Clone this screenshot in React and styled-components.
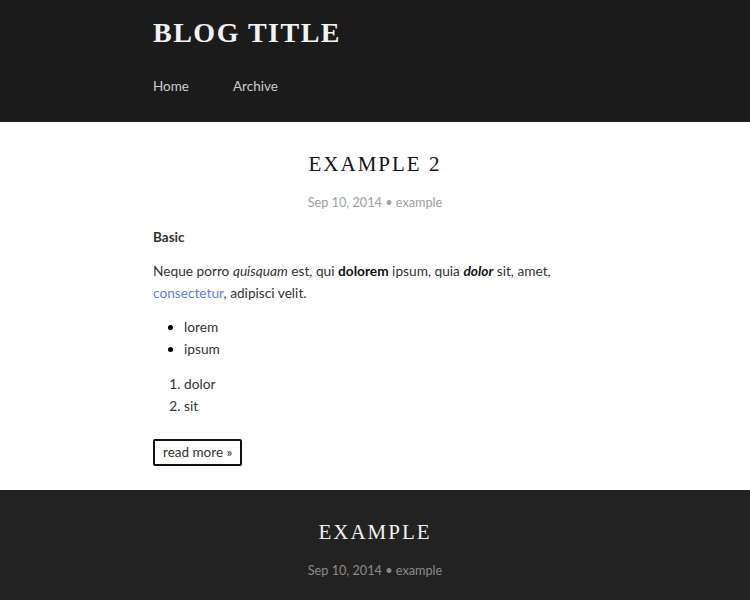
import React from 'react';
import styled, { createGlobalStyle } from 'styled-components';

const GlobalStyle = createGlobalStyle`
  body {
    margin: 0;
    font-family: 'Lato', 'Noto Sans', sans-serif;
    background: #ffffff;
  }
`;

const Header = styled.header`
  background-color: #1b1b1b;
  height: 122px;
  box-sizing: border-box;
  padding-top: 15px;
`;

const Container = styled.div`
  width: 444px;
  margin: 0 auto;
`;

const BlogTitle = styled.h1`
  margin: 0;
  font-family: 'Liberation Serif', serif;
  font-size: 28px;
  font-weight: bold;
  letter-spacing: 1.5px;
  color: #f2f2f2;
  line-height: 36px;
`;

const Nav = styled.nav`
  display: flex;
  gap: 44px;
  margin-top: 27px;
`;

const NavLink = styled.a`
  color: #cccccc;
  font-size: 13.5px;
  text-decoration: none;
`;

const Post = styled.section`
  background-color: ${(p) => (p.dark ? '#222222' : '#ffffff')};
  padding: 28px 0 24px;
`;

const PostTitle = styled.h2`
  margin: 0;
  text-align: center;
  font-family: 'Liberation Serif', serif;
  font-weight: normal;
  font-size: 21px;
  letter-spacing: 2px;
  line-height: 28px;
  color: ${(p) => (p.dark ? '#f2f2f2' : '#111111')};
`;

const Meta = styled.div`
  text-align: center;
  font-size: 12.7px;
  color: ${(p) => (p.dark ? '#8a8a8a' : '#a0a0a0')};
  margin-top: 16px;
`;

const Body = styled.div`
  font-size: 13.7px;
  line-height: 22px;
  color: #333333;
  margin-top: 16px;
`;

const SubHeading = styled.h3`
  margin: 0 0 12px;
  font-size: 13.5px;
  font-weight: bold;
  color: #333333;
  line-height: 22px;
`;

const Para = styled.p`
  margin: 0 0 12px;
`;

const Link = styled.a`
  color: #5b82d8;
  text-decoration: none;
`;

const Strong = styled.strong`
  color: #111111;
`;

const Em = styled.em`
  color: ${(p) => (p.dark ? '#111111' : 'inherit')};
  font-weight: ${(p) => (p.dark ? 'bold' : 'normal')};
`;

const List = styled.ul`
  margin: 0 0 13px;
  padding-left: 31px;
  li::marker {
    color: #000;
  }
`;

const OrderedList = styled.ol`
  margin: 0 0 12px;
  padding-left: 31px;
`;

const ReadMore = styled.a`
  display: inline-block;
  margin-top: 10px;
  border: 2px solid #111111;
  border-radius: 2px;
  padding: 0 8px;
  line-height: 23px;
  font-size: 13.5px;
  color: #333333;
  text-decoration: none;
`;

export default function App() {
  return (
    <>
      <GlobalStyle />
      <Header>
        <Container>
          <BlogTitle>BLOG TITLE</BlogTitle>
          <Nav>
            <NavLink href="#">Home</NavLink>
            <NavLink href="#">Archive</NavLink>
          </Nav>
        </Container>
      </Header>
      <Post>
        <Container>
          <PostTitle>EXAMPLE 2</PostTitle>
          <Meta>Sep 10, 2014 • example</Meta>
          <Body>
            <SubHeading>Basic</SubHeading>
            <Para>
              Neque porro <em>quisquam</em> est, qui <Strong>dolorem</Strong> ipsum, quia{' '}
              <Em dark>dolor</Em> sit, amet, <Link href="#">consectetur</Link>, adipisci velit.
            </Para>
            <List>
              <li>lorem</li>
              <li>ipsum</li>
            </List>
            <OrderedList>
              <li>dolor</li>
              <li>sit</li>
            </OrderedList>
            <ReadMore href="#">read more »</ReadMore>
          </Body>
        </Container>
      </Post>
      <Post dark>
        <Container>
          <PostTitle dark>EXAMPLE</PostTitle>
          <Meta dark>Sep 10, 2014 • example</Meta>
        </Container>
      </Post>
    </>
  );
}
